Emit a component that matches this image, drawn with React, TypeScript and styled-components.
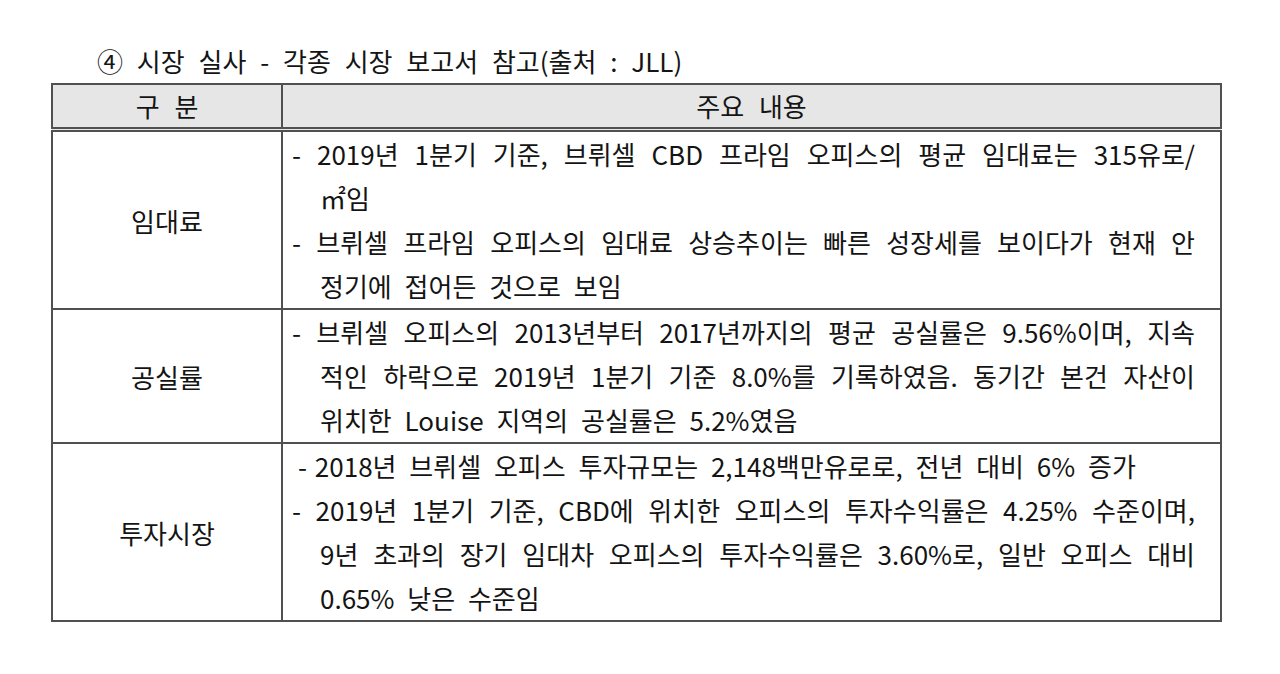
import styled, { createGlobalStyle } from "styled-components";

const GlobalStyle = createGlobalStyle`
  html, body {
    margin: 0;
    padding: 0;
    background: #ffffff;
  }
  body {
    font-family: "Noto Sans CJK KR", "Noto Sans", sans-serif;
    color: #141414;
  }
`;

const Page = styled.div`
  width: 1280px;
  height: 674px;
  padding: 41px 0 0 51px;
  box-sizing: border-box;
`;

const Title = styled.h2`
  margin: 0 0 0 46px;
  height: 42px;
  font-size: 26px;
  font-weight: 400;
  line-height: 40px;
  word-spacing: 8px;
`;

const Table = styled.table`
  width: 1171px;
  border-collapse: collapse;
  table-layout: fixed;
  font-size: 26px;
`;

const HeadCell = styled.th<{ $width?: number }>`
  width: ${(p) => (p.$width ? `${p.$width}px` : "auto")};
  height: 42px;
  padding: 0;
  background: #e6e6e6;
  border: 2px solid #505050;
  border-bottom: 5px double #505050;
  font-weight: 400;
  line-height: 42px;
  text-align: center;
  word-spacing: 9px;
`;

const LabelCell = styled.td`
  border: 2px solid #505050;
  text-align: center;
  vertical-align: middle;
  padding: 0;
`;

const ContentCell = styled.td`
  border: 2px solid #505050;
  padding: 0 25px 0 9px;
  vertical-align: middle;
`;

const Line = styled.div<{ $fill?: boolean; $indent?: boolean; $shift?: number }>`
  line-height: 44px;
  height: 44px;
  white-space: nowrap;
  word-spacing: 7px;
  padding-left: ${(p) => (p.$indent ? 28 : p.$shift ?? 0)}px;
  text-align: ${(p) => (p.$fill ? "justify" : "left")};
  text-align-last: ${(p) => (p.$fill ? "justify" : "left")};
`;

const Dash = styled.span`
  margin-right: -5px;
`;

interface Row {
  label: string;
  lines: { text: string; fill?: boolean; indent?: boolean; shift?: number; tight?: boolean }[];
}

const rows: Row[] = [
  {
    label: "임대료",
    lines: [
      { text: "- 2019년 1분기 기준, 브뤼셀 CBD 프라임 오피스의 평균 임대료는 315유로/", fill: true },
      { text: "㎡임", indent: true },
      { text: "- 브뤼셀 프라임 오피스의 임대료 상승추이는 빠른 성장세를 보이다가 현재 안", fill: true },
      { text: "정기에 접어든 것으로 보임", indent: true },
    ],
  },
  {
    label: "공실률",
    lines: [
      { text: "- 브뤼셀 오피스의 2013년부터 2017년까지의 평균 공실률은 9.56%이며, 지속", fill: true },
      { text: "적인 하락으로 2019년 1분기 기준 8.0%를 기록하였음. 동기간 본건 자산이", fill: true, indent: true },
      { text: "위치한 Louise 지역의 공실률은 5.2%였음", indent: true },
    ],
  },
  {
    label: "투자시장",
    lines: [
      { text: "2018년 브뤼셀 오피스 투자규모는 2,148백만유로로, 전년 대비 6% 증가", shift: 6, tight: true },
      { text: "- 2019년 1분기 기준, CBD에 위치한 오피스의 투자수익률은 4.25% 수준이며,", fill: true },
      { text: "9년 초과의 장기 임대차 오피스의 투자수익률은 3.60%로, 일반 오피스 대비", fill: true, indent: true },
      { text: "0.65% 낮은 수준임", indent: true },
    ],
  },
];

export default function App() {
  return (
    <>
      <GlobalStyle />
      <Page>
        <Title>④ 시장 실사 - 각종 시장 보고서 참고(출처 : JLL)</Title>
        <Table>
          <thead>
            <tr>
              <HeadCell $width={228}>구 분</HeadCell>
              <HeadCell>주요 내용</HeadCell>
            </tr>
          </thead>
          <tbody>
            {rows.map((row) => (
              <tr key={row.label}>
                <LabelCell>{row.label}</LabelCell>
                <ContentCell>
                  {row.lines.map((line, i) => (
                    <Line key={i} $fill={line.fill} $indent={line.indent} $shift={line.shift}>
                      {line.tight ? (
                        <>
                          <Dash>-</Dash> {line.text}
                        </>
                      ) : (
                        line.text
                      )}
                    </Line>
                  ))}
                </ContentCell>
              </tr>
            ))}
          </tbody>
        </Table>
      </Page>
    </>
  );
}
